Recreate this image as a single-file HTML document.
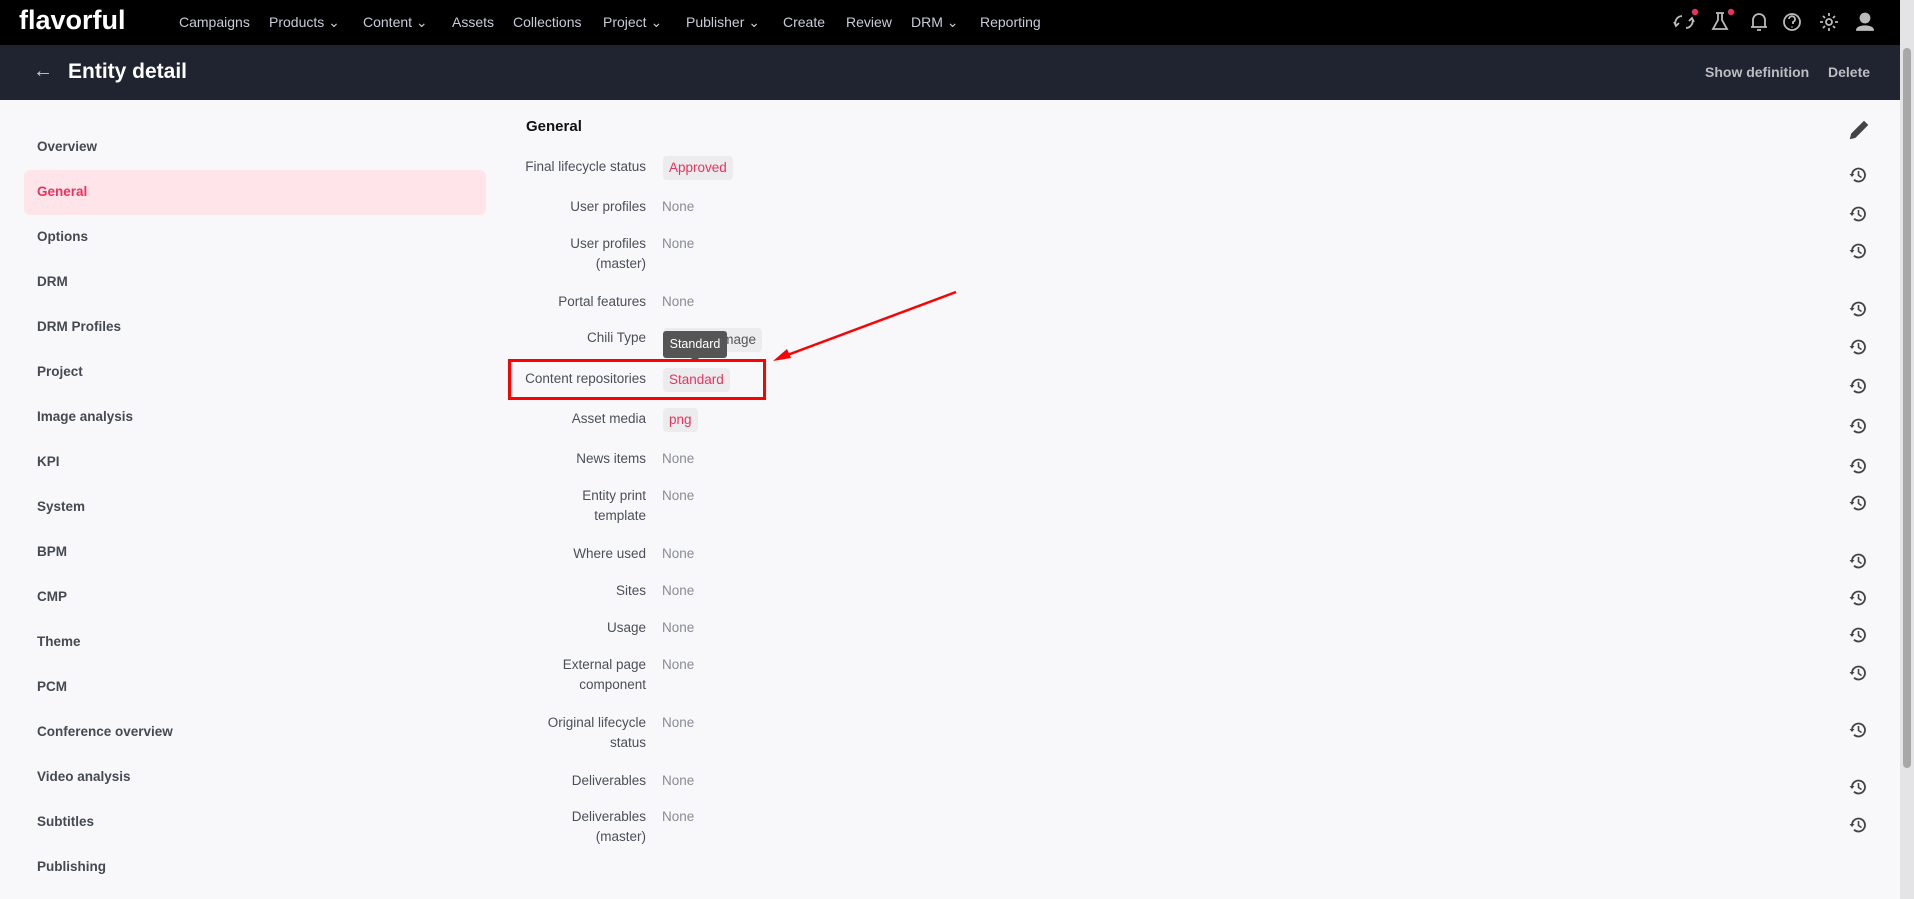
<!DOCTYPE html>
<html><head><meta charset="utf-8"><style>
*{margin:0;padding:0;box-sizing:border-box}
body{width:1914px;height:899px;overflow:hidden;background:#f8f8fa;font-family:"Liberation Sans",sans-serif;position:relative}
.top{position:absolute;left:0;top:0;width:1900px;height:45px;background:#000}
.logo{position:absolute;left:19px;top:5px;color:#fff;font-weight:bold;font-size:27px;letter-spacing:0px}
.nav{position:absolute;top:14px;color:#c9cbd8;font-size:14px;white-space:nowrap}
.hdr{position:absolute;left:0;top:45px;width:1900px;height:55px;background:#1f2430}
.ttl{position:absolute;left:68px;top:60px;color:#fff;font-size:21px;font-weight:bold}
.hbtn{position:absolute;top:64px;color:#bdbdc2;font-size:14px;font-weight:bold}
.sb{position:absolute;right:0;top:0;width:14px;height:899px;background:#e4e4e6}
.sb i{position:absolute;left:3px;top:48px;width:8px;height:720px;background:#a8a8a8;border-radius:4px}
.side{position:absolute;left:37px;font-size:13.5px;color:#454952;font-weight:bold}
.act{position:absolute;left:24px;top:170px;width:462px;height:45px;background:#ffe4ea;border-radius:6px}
.lbl{position:absolute;right:1268px;font-size:13.5px;color:#4b4f58;text-align:right;line-height:20px;white-space:nowrap}
.val{position:absolute;left:662px;font-size:13.5px;color:#888c94;line-height:20px}
.chip{position:absolute;left:663px;background:#ececee;border-radius:4px;color:#e8335e;font-size:13.5px;padding:3px 6px;line-height:18px;white-space:nowrap}
.hist{position:absolute;left:1849px;width:18px;height:18px}
</style></head><body>
<div class="top"></div>
<div class="logo">flavorful</div>
<div class="nav" style="left:179px">Campaigns</div>
<div class="nav" style="left:269px">Products ⌄</div>
<div class="nav" style="left:363px">Content ⌄</div>
<div class="nav" style="left:452px">Assets</div>
<div class="nav" style="left:513px">Collections</div>
<div class="nav" style="left:603px">Project ⌄</div>
<div class="nav" style="left:686px">Publisher ⌄</div>
<div class="nav" style="left:783px">Create</div>
<div class="nav" style="left:846px">Review</div>
<div class="nav" style="left:911px">DRM ⌄</div>
<div class="nav" style="left:980px">Reporting</div>
<svg style="position:absolute;left:1672px;top:8px" width="240" height="30" fill="none" stroke="#bbb" stroke-width="1.8">
<path d="M10 8a7 7 0 0 0-6 10M14 20a7 7 0 0 0 6-10M2 14l2 4 3-3M22 14l-2-4-3 3"/><circle cx="23" cy="4" r="3.2" fill="#e8335e" stroke="none"/>
<path d="M44 5h8M46 5v7l-5 9h14l-5-9V5"/><circle cx="59" cy="4" r="3.2" fill="#e8335e" stroke="none"/>
<path d="M81 19V12a6 6 0 0 1 12 0v7zM79 19h16M85 22h4"/>
<circle cx="120" cy="14" r="8"/><path d="M117 11a3 3 0 1 1 4 3v2M120 18.5v1"/>
<circle cx="157" cy="14" r="3"/><path d="M157 5v3M157 20v3M148 14h3M163 14h3M151 8l2 2M161 18l2 2M151 20l2-2M161 10l2-2"/>
<circle cx="193" cy="10" r="4.5" fill="#bbb"/><path d="M185 22c0-5 16-5 16 0z" fill="#bbb"/>
</svg>
<div class="hdr"></div>
<div style="position:absolute;left:33px;top:60px;color:#ccc;font-size:20px">←</div>
<div class="ttl">Entity detail</div>
<div class="hbtn" style="left:1705px">Show definition</div>
<div class="hbtn" style="left:1828px">Delete</div>
<div class="sb"><i></i></div>

<div class="act"></div>
<div class="side" style="top:139px">Overview</div>
<div class="side" style="top:184px;color:#e8335e">General</div>
<div class="side" style="top:229px">Options</div>
<div class="side" style="top:274px">DRM</div>
<div class="side" style="top:319px">DRM Profiles</div>
<div class="side" style="top:364px">Project</div>
<div class="side" style="top:409px">Image analysis</div>
<div class="side" style="top:454px">KPI</div>
<div class="side" style="top:499px">System</div>
<div class="side" style="top:544px">BPM</div>
<div class="side" style="top:589px">CMP</div>
<div class="side" style="top:634px">Theme</div>
<div class="side" style="top:679px">PCM</div>
<div class="side" style="top:724px">Conference overview</div>
<div class="side" style="top:769px">Video analysis</div>
<div class="side" style="top:814px">Subtitles</div>
<div class="side" style="top:859px">Publishing</div>

<div style="position:absolute;left:526px;top:118px;font-size:15px;font-weight:bold;color:#111">General</div>

<div class="lbl" style="top:157px">Final lifecycle status</div><div class="chip" style="top:156px">Approved</div>
<div class="lbl" style="top:197px">User profiles</div><div class="val" style="top:197px">None</div>
<div class="lbl" style="top:234px">User profiles<br>(master)</div><div class="val" style="top:234px">None</div>
<div class="lbl" style="top:292px">Portal features</div><div class="val" style="top:292px">None</div>
<div class="lbl" style="top:328px">Chili Type</div><div class="chip" style="top:328px;color:#555">Product image</div>
<div class="lbl" style="top:369px">Content repositories</div><div class="chip" style="top:368px">Standard</div>
<div class="lbl" style="top:409px">Asset media</div><div class="chip" style="top:408px">png</div>
<div class="lbl" style="top:449px">News items</div><div class="val" style="top:449px">None</div>
<div class="lbl" style="top:486px">Entity print<br>template</div><div class="val" style="top:486px">None</div>
<div class="lbl" style="top:544px">Where used</div><div class="val" style="top:544px">None</div>
<div class="lbl" style="top:581px">Sites</div><div class="val" style="top:581px">None</div>
<div class="lbl" style="top:618px">Usage</div><div class="val" style="top:618px">None</div>
<div class="lbl" style="top:655px">External page<br>component</div><div class="val" style="top:655px">None</div>
<div class="lbl" style="top:713px">Original lifecycle<br>status</div><div class="val" style="top:713px">None</div>
<div class="lbl" style="top:771px">Deliverables</div><div class="val" style="top:771px">None</div>
<div class="lbl" style="top:807px">Deliverables<br>(master)</div><div class="val" style="top:807px">None</div>

<div style="position:absolute;left:663px;top:331px;width:64px;height:27px;background:#555;border-radius:3px;color:#fff;font-size:12.5px;text-align:center;line-height:27px">Standard</div>
<div style="position:absolute;left:691px;top:358px;border:4px solid transparent;border-top-color:#555"></div>

<div style="position:absolute;left:508px;top:359px;width:258px;height:41px;border:3px solid #f00"></div>
<svg style="position:absolute;left:0;top:0" width="1914" height="899"><path d="M956 292L782 357" stroke="#f00" stroke-width="2.5"/><path d="M773 361l14-12 4 9z" fill="#f00"/>
<g fill="none" stroke="#444" stroke-width="1.8">
<path d="M1852 134l12-12 3 3-12 12-4 1z" fill="#444"/>
</g></svg>

<svg width="0" height="0" style="position:absolute"><defs><symbol id="h" viewBox="0 0 18 18"><path d="M3 9a6.5 6.5 0 1 1 2 4.7" fill="none" stroke="#444" stroke-width="1.8"/><path d="M0.5 8h5l-2.5 3z" fill="#444"/><path d="M9.5 5v4.5l3 2" fill="none" stroke="#444" stroke-width="1.6"/></symbol></defs></svg>
<svg class="hist" style="top:166px"><use href="#h"/></svg>
<svg class="hist" style="top:205px"><use href="#h"/></svg>
<svg class="hist" style="top:242px"><use href="#h"/></svg>
<svg class="hist" style="top:300px"><use href="#h"/></svg>
<svg class="hist" style="top:338px"><use href="#h"/></svg>
<svg class="hist" style="top:377px"><use href="#h"/></svg>
<svg class="hist" style="top:417px"><use href="#h"/></svg>
<svg class="hist" style="top:457px"><use href="#h"/></svg>
<svg class="hist" style="top:494px"><use href="#h"/></svg>
<svg class="hist" style="top:552px"><use href="#h"/></svg>
<svg class="hist" style="top:589px"><use href="#h"/></svg>
<svg class="hist" style="top:626px"><use href="#h"/></svg>
<svg class="hist" style="top:664px"><use href="#h"/></svg>
<svg class="hist" style="top:721px"><use href="#h"/></svg>
<svg class="hist" style="top:778px"><use href="#h"/></svg>
<svg class="hist" style="top:816px"><use href="#h"/></svg>
</body></html>
